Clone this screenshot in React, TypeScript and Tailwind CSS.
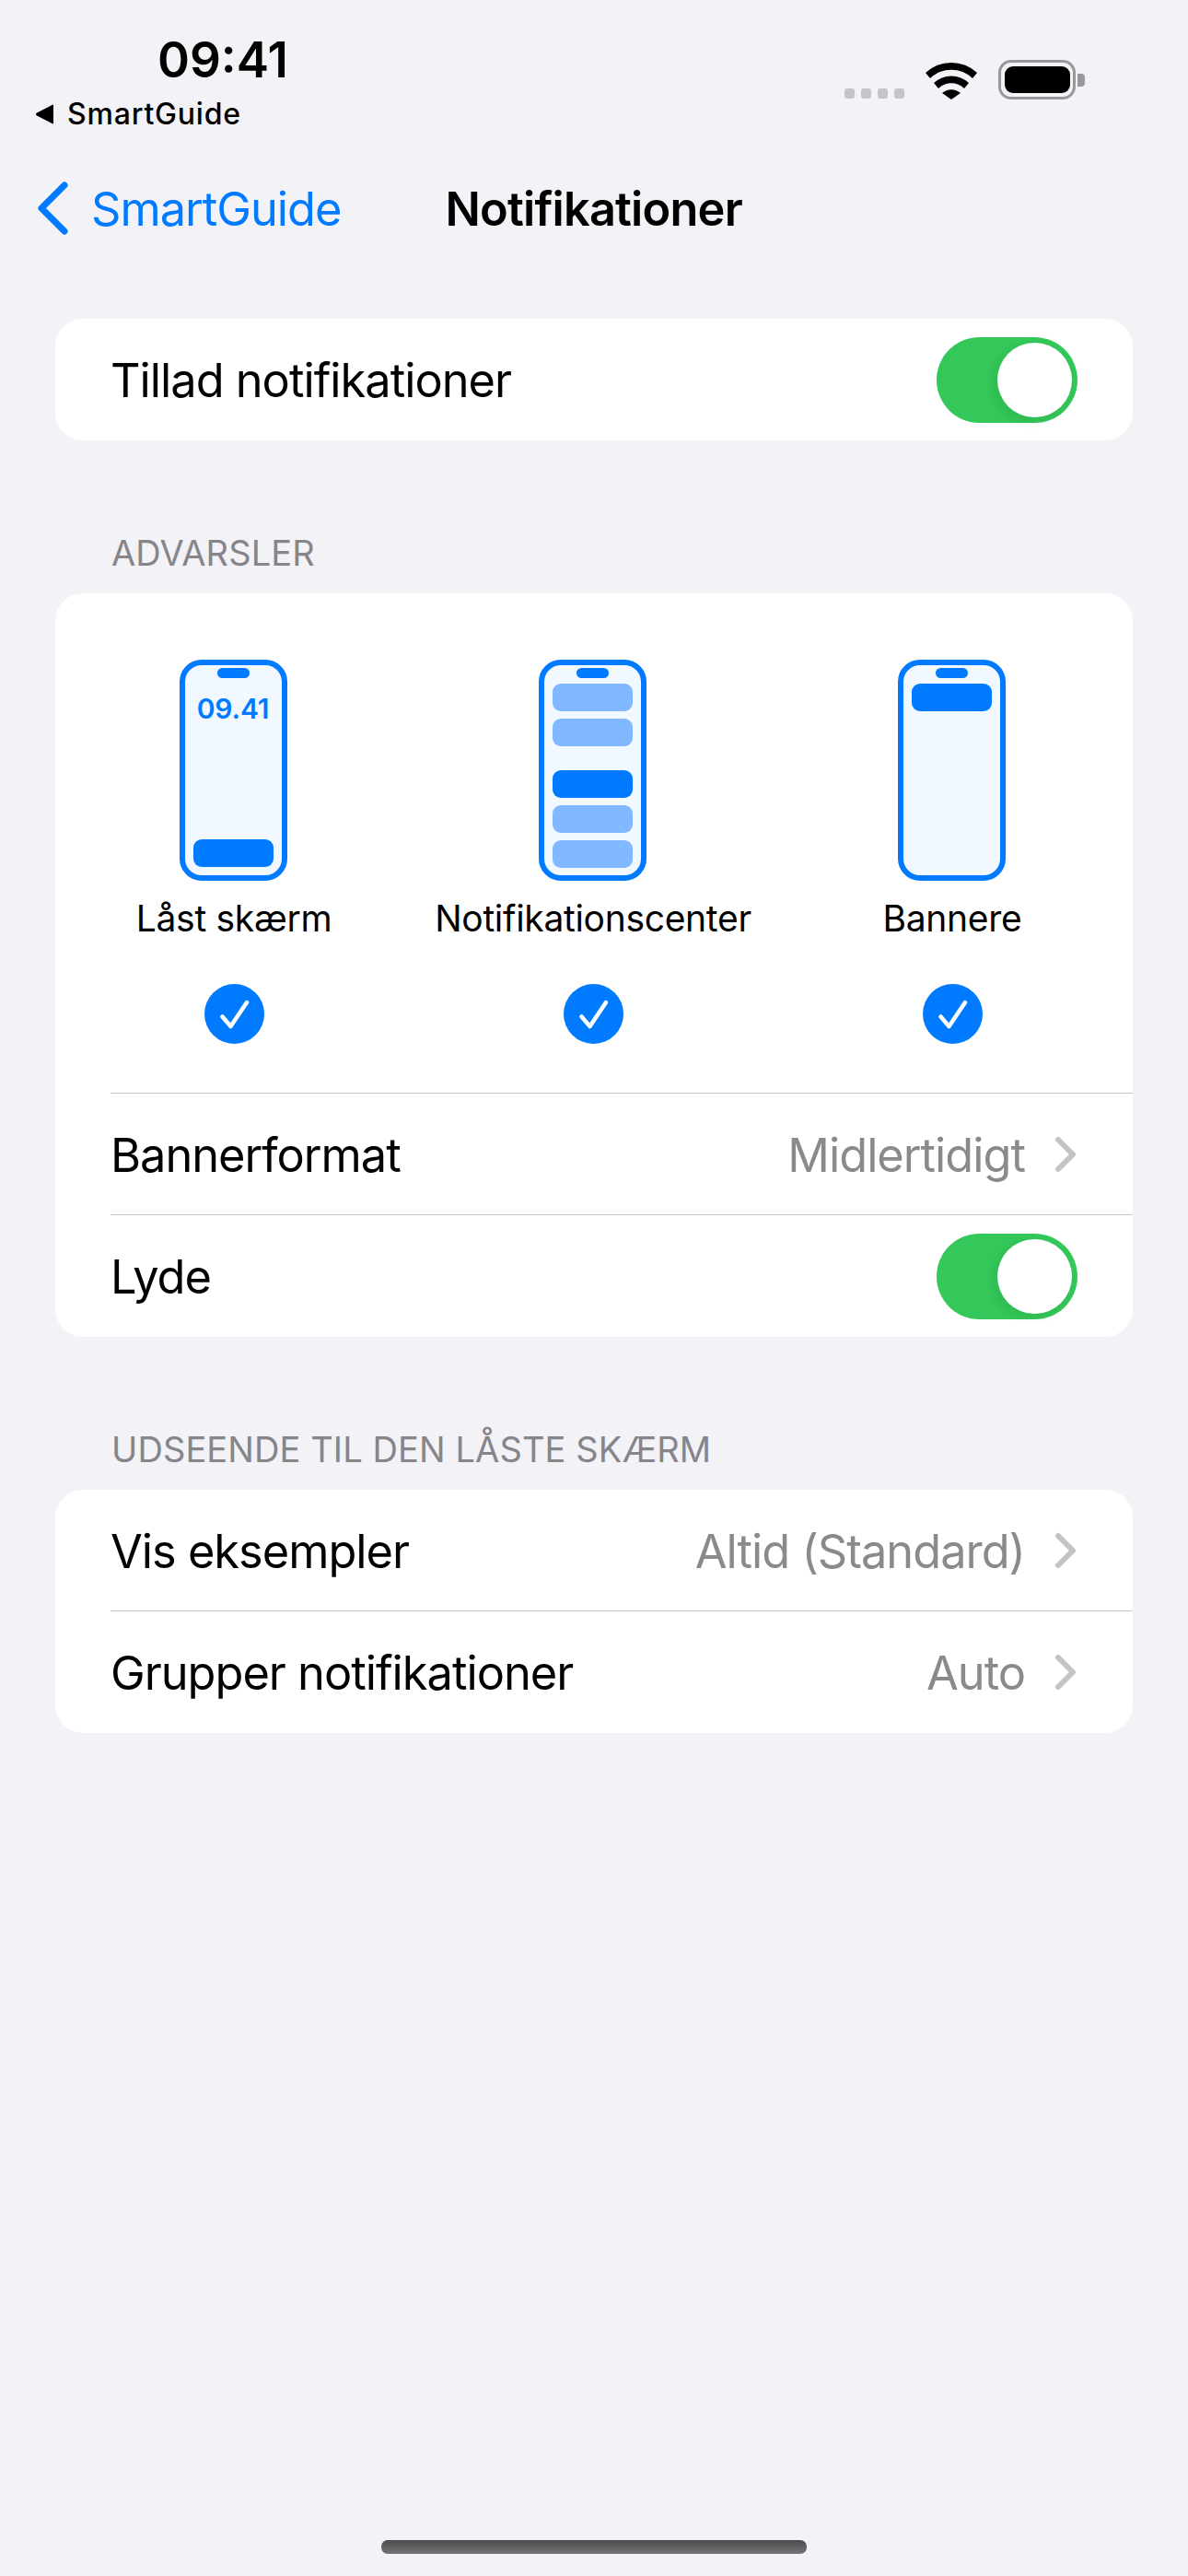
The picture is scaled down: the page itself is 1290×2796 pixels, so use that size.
import React from "react";

function Toggle() {
  return (
    <div className="flex h-[93px] w-[153px] items-center justify-end rounded-full bg-[#34c759] p-[6px]">
      <div className="h-[81px] w-[81px] rounded-full bg-white shadow-[-4px_4px_12px_rgba(0,0,0,0.08)]" />
    </div>
  );
}

function Chevron() {
  return (
    <svg width="24" height="40" viewBox="0 0 24 40" className="ml-[32px] mr-[1px]">
      <path d="M4 4 L20 20 L4 36" fill="none" stroke="#c4c4c7" strokeWidth="6" strokeLinecap="round" strokeLinejoin="round" />
    </svg>
  );
}

function Row({ label, value, last }: { label: string; value?: string; last?: boolean }) {
  return (
    <div className={`ml-[60px] flex h-[132px] items-center pr-[60px] ${last ? "" : "border-b border-[#c6c6c8]"}`}>
      <span className="flex-1 pt-[2px] text-[50.5px] tracking-[-1px] text-black">{label}</span>
      {value ? (
        <>
          <span className="pt-[2px] text-[50.5px] tracking-[-1px] text-[#8a8a8e]">{value}</span>
          <Chevron />
        </>
      ) : (
        <Toggle />
      )}
    </div>
  );
}

function Bar({ dark, className = "" }: { dark?: boolean; className?: string }) {
  return <div className={`h-[30px] w-[87px] shrink-0 rounded-[9px] ${dark ? "bg-[#007aff]" : "bg-[#80b9ff]"} ${className}`} />;
}

function Phone({ children }: { children?: React.ReactNode }) {
  return (
    <div className="mr-[2px] flex h-[240px] w-[117px] flex-col items-center rounded-[24px] border-[6px] border-[#007aff] bg-[#f2f8ff] pt-[3px] pb-[9px]">
      <div className="mb-[6px] h-[11px] w-[35px] shrink-0 rounded-full bg-[#007aff]" />
      {children}
    </div>
  );
}

function Alert({ label, children }: { label: string; children: React.ReactNode }) {
  return (
    <div className="flex flex-col items-center">
      <Phone>{children}</Phone>
      <div className="mt-[17px] h-[48px] whitespace-nowrap text-[39px] leading-[48px] tracking-[-0.3px] text-black">{label}</div>
      <div className="mt-[47px] flex h-[65px] w-[65px] items-center justify-center rounded-full bg-[#007aff]">
        <svg width="65" height="65" viewBox="0 0 65 65">
          <path d="M19.5 35.5 L28.5 46 L46 20" fill="none" stroke="white" strokeWidth="4.5" strokeLinecap="round" strokeLinejoin="round" />
        </svg>
      </div>
    </div>
  );
}

function SectionLabel({ children }: { children: React.ReactNode }) {
  return <div className="ml-[121px] h-[48px] text-[38px] leading-[48px] tracking-[0.1px] text-[#85858a]">{children}</div>;
}

export default function App() {
  return (
    <div className="flex h-[2796px] w-[1290px] flex-col overflow-hidden bg-[#f2f2f7] font-['Inter',sans-serif]">
      <div className="flex h-[168px] shrink-0 justify-between pl-[38px] pr-[112px] pt-[34px]">
        <div className="flex flex-col">
          <div className="ml-[133px] h-[62px] text-[53px] font-semibold leading-[62px] tracking-[0px] text-black">09:41</div>
          <div className="mt-[12px] flex h-[32px] items-center">
            <svg width="22" height="22" viewBox="0 0 22 22">
              <path d="M20 1.5 V20.5 Q20 22 18.5 21 L2 12.5 Q0 11 2 9.5 L18.5 1 Q20 0 20 1.5 Z" fill="black" />
            </svg>
            <span className="ml-[13px] text-[32px] font-medium leading-[32px] tracking-[0.8px] text-black">SmartGuide</span>
          </div>
        </div>
        <div className="flex items-start pt-[31px]">
          <div className="mt-[31px] flex gap-[7px]">
            <div className="h-[11px] w-[11px] rounded-[3px] bg-[#c4c4c9]" />
            <div className="h-[11px] w-[11px] rounded-[3px] bg-[#c4c4c9]" />
            <div className="h-[11px] w-[11px] rounded-[3px] bg-[#c4c4c9]" />
            <div className="h-[11px] w-[11px] rounded-[3px] bg-[#c4c4c9]" />
          </div>
          <svg width="58" height="43" viewBox="0 0 58 43" className="ml-[22px]">
            <path d="M1 14 A41 41 0 0 1 57 14 L52 20 A33 33 0 0 0 6 20 Z" fill="black" />
            <path d="M10 25 A28 28 0 0 1 48 25 L43 31 A20 20 0 0 0 15 31 Z" fill="black" />
            <path d="M19 36 A15 15 0 0 1 39 36 L29 43 Z" fill="black" />
          </svg>
          <div className="ml-[22px] flex items-center">
            <div className="flex h-[43px] w-[84px] items-center justify-center rounded-[14px] border-[3px] border-[#98989c]">
              <div className="h-[29px] w-[71px] rounded-[9px] bg-black" />
            </div>
            <div className="ml-[2px] h-[14px] w-[8px] rounded-r-[4px] bg-[#98989c]" />
          </div>
        </div>
      </div>

      <div className="flex h-[116px] shrink-0 items-center pl-[40px]">
        <svg width="34" height="58" viewBox="0 0 34 58">
          <path d="M30 4 L5 29 L30 54" fill="none" stroke="#007aff" strokeWidth="7" strokeLinecap="round" strokeLinejoin="round" />
        </svg>
        <span className="ml-[25px] pt-[2px] text-[50.5px] tracking-[-1px] text-[#007aff]">SmartGuide</span>
        <span className="ml-[113px] pt-[2px] text-[50.5px] font-semibold tracking-[-0.8px] text-black">Notifikationer</span>
      </div>

      <div className="mx-[60px] mt-[62px] shrink-0 rounded-[30px] bg-white">
        <Row label="Tillad notifikationer" last />
      </div>

      <div className="mt-[98px] shrink-0"><SectionLabel>ADVARSLER</SectionLabel></div>

      <div className="mx-[60px] mt-[20px] shrink-0 rounded-[30px] bg-white">
        <div className="-ml-[1px] grid grid-cols-[390px_390px_390px] pt-[72px]">
          <Alert label="Låst skærm">
            <div className="mt-[9px] text-[30px] font-semibold leading-[36px] tracking-[-0.2px] text-[#007aff]">09.41</div>
            <Bar dark className="mt-auto" />
          </Alert>
          <Alert label="Notifikationscenter">
            <Bar />
            <Bar className="mt-[8px]" />
            <Bar dark className="mt-[26px]" />
            <Bar className="mt-[8px]" />
            <Bar className="mt-[8px]" />
          </Alert>
          <Alert label="Bannere">
            <Bar dark />
          </Alert>
        </div>
        <div className="ml-[60px] mt-[53px] border-b border-[#c6c6c8]" />
        <Row label="Bannerformat" value="Midlertidigt" />
        <Row label="Lyde" last />
      </div>

      <div className="mt-[98px] shrink-0"><SectionLabel>UDSEENDE TIL DEN LÅSTE SKÆRM</SectionLabel></div>

      <div className="mx-[60px] mt-[20px] shrink-0 rounded-[30px] bg-white">
        <Row label="Vis eksempler" value="Altid (Standard)" />
        <Row label="Grupper notifikationer" value="Auto" last />
      </div>

      <div className="mx-auto mt-auto mb-[24px] h-[15px] w-[462px] rounded-[7px] bg-gradient-to-b from-[#4d4d4f] to-[#747476]" />
    </div>
  );
}
